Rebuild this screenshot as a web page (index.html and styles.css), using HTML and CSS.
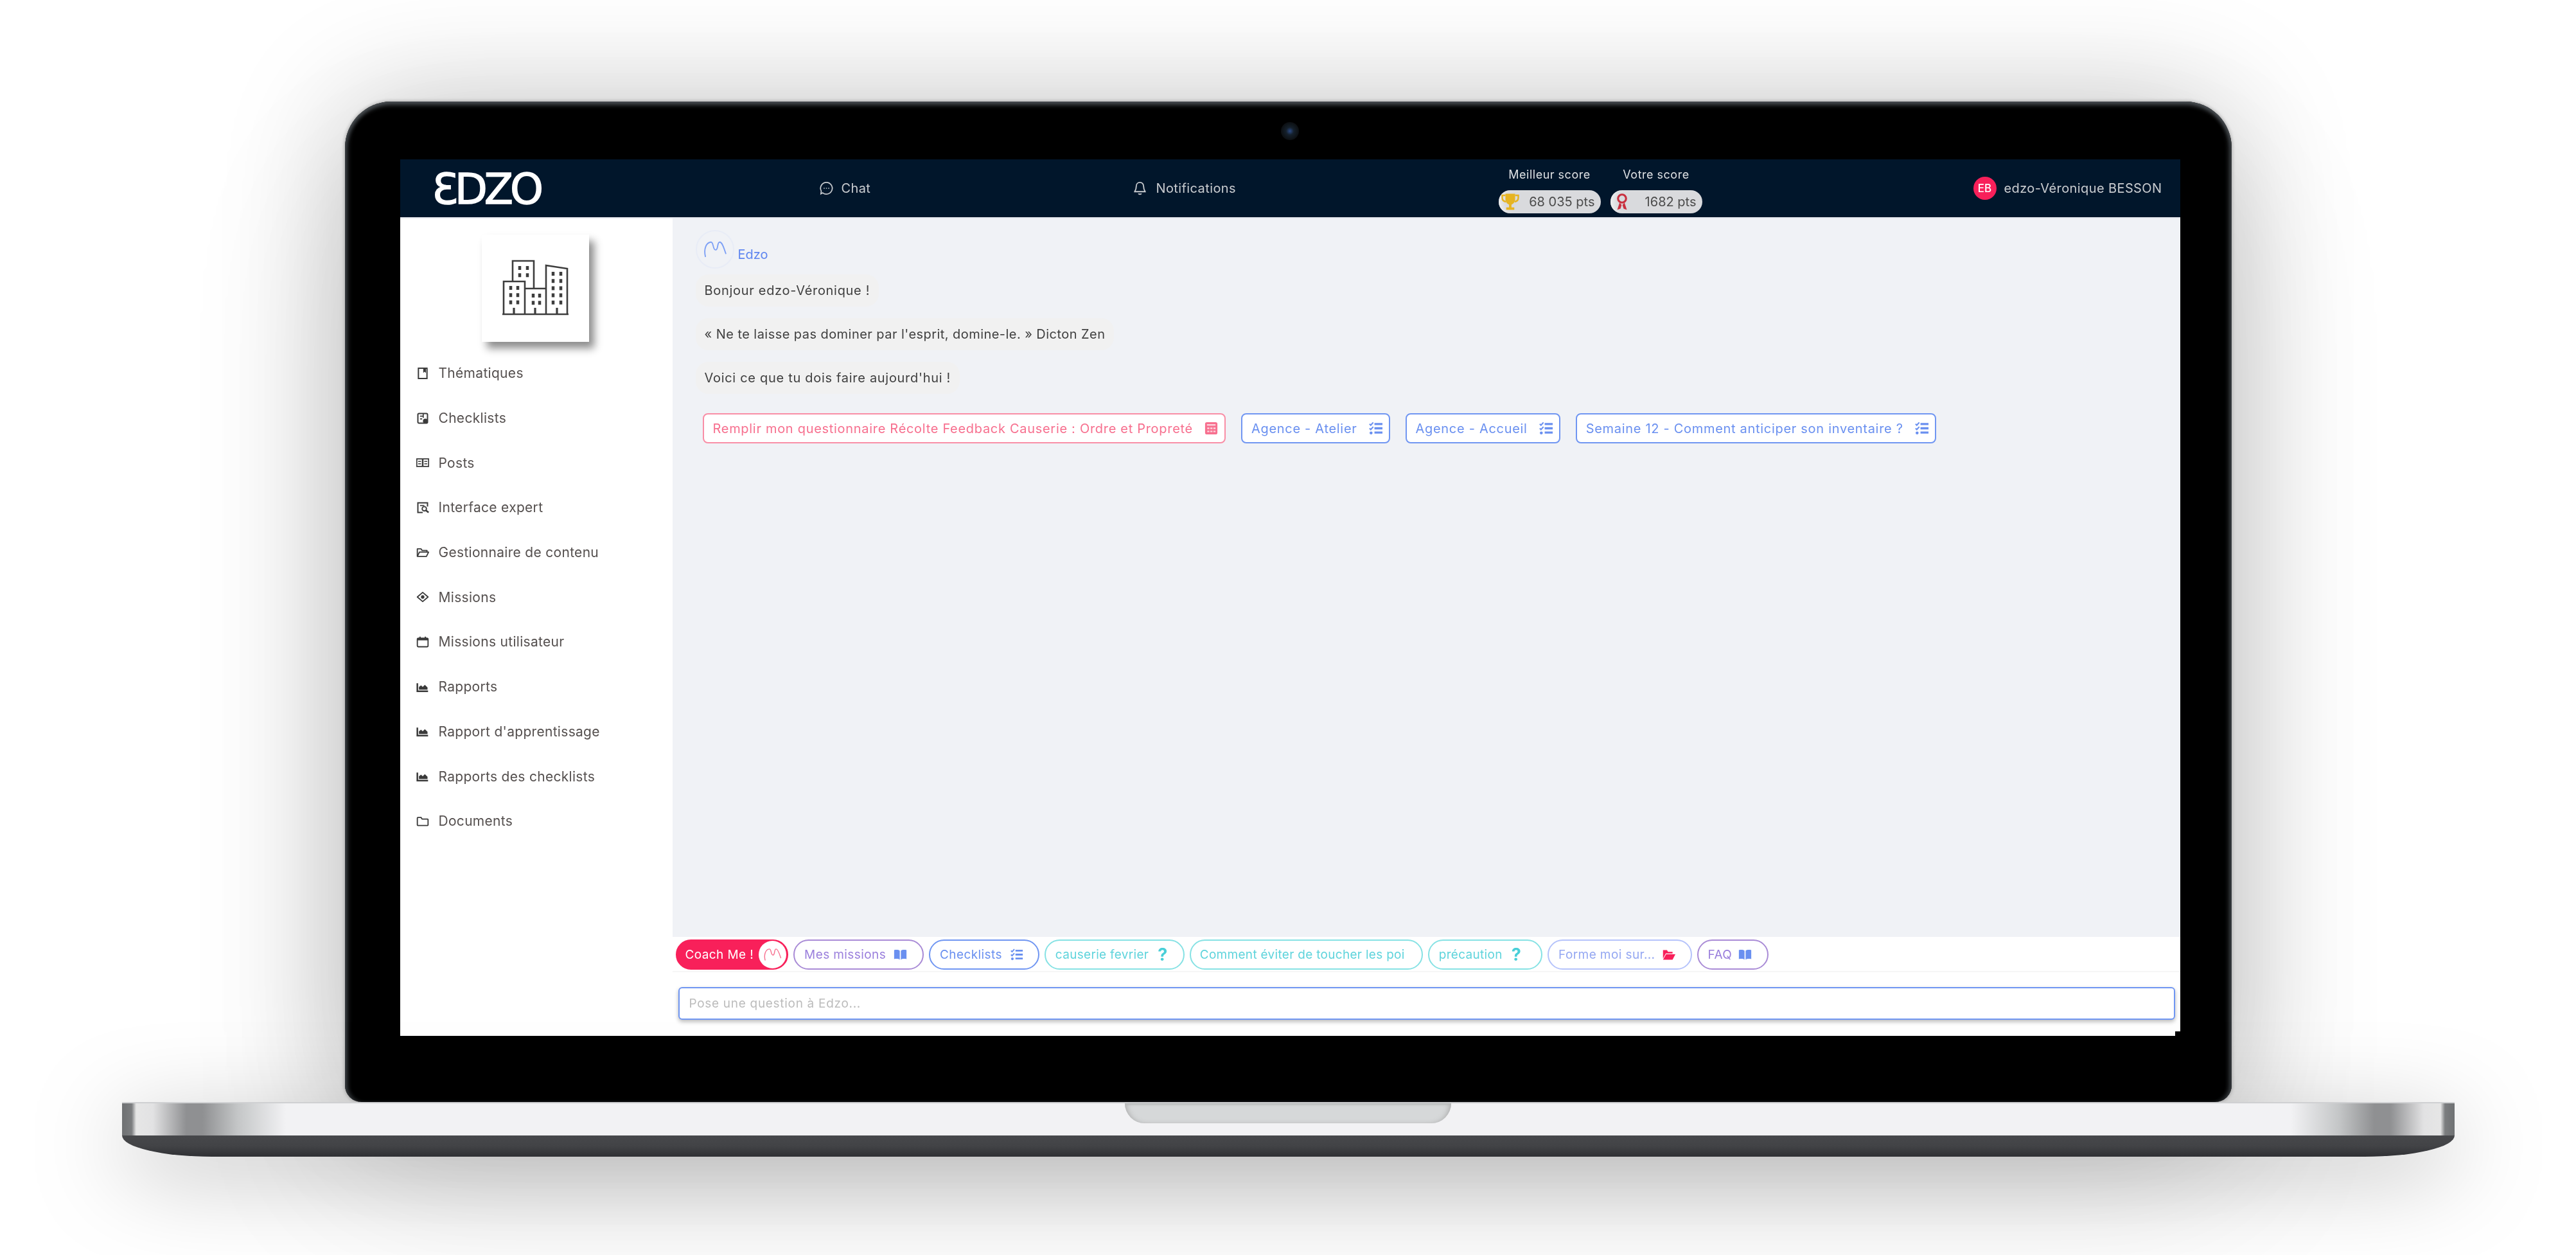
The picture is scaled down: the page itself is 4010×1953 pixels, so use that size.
FILE: index.html
```html
<!DOCTYPE html>
<html lang="fr">
  <head>
    <meta charset="UTF-8">
    <meta name="viewport" content="width=device-width, initial-scale=1.0">
    <title>Edzo</title>
    <link rel="stylesheet" href="styles.css">
  </head>
  <body>
    <svg class="sprite" xmlns="http://www.w3.org/2000/svg">
      <symbol id="i-book" viewBox="0 0 24 24"><path d="M4 2.500h16v19H4z" fill="none" stroke="currentColor" stroke-width="2.400"/><path d="M13 3h5v8l-2.500-2-2.500 2z" fill="currentColor"/></symbol>
      <symbol id="i-check" viewBox="0 0 24 24"><rect x="3" y="3" width="18" height="18" rx="2" fill="none" stroke="currentColor" stroke-width="2.400"/><path d="M7 8h7M7 13h4M13 3v8" stroke="currentColor" stroke-width="2" fill="none"/><circle cx="17" cy="17" r="4.500" fill="currentColor"/></symbol>
      <symbol id="i-posts" viewBox="0 0 24 24"><path d="M1 5h10.500v14H1zM12.500 5H23v14H12.500z" fill="none" stroke="currentColor" stroke-width="2"/><path d="M3.500 9.500h5.500M15 9.500h5.500M3.500 14h5.500M15 14h5.500" stroke="currentColor" stroke-width="1.800"/></symbol>
      <symbol id="i-expert" viewBox="0 0 24 24"><path d="M21 10V3H3v18h9" fill="none" stroke="currentColor" stroke-width="2.400"/><circle cx="15" cy="14" r="4" fill="none" stroke="currentColor" stroke-width="2.200"/><path d="M18 17l5 4" stroke="currentColor" stroke-width="3"/><path d="M7 8h8" stroke="currentColor" stroke-width="2"/></symbol>
      <symbol id="i-folder-open" viewBox="0 0 24 24"><path d="M2 19V5h7l2 3h9v3" fill="none" stroke="currentColor" stroke-width="2.200" stroke-linejoin="round"/><path d="M2 19l4-8h17l-4 8z" fill="none" stroke="currentColor" stroke-width="2.200" stroke-linejoin="round"/></symbol>
      <symbol id="i-mission" viewBox="0 0 24 24"><path d="M12 3.500L22 12l-10 8.500L2 12z" fill="none" stroke="currentColor" stroke-width="2.200" stroke-linejoin="round"/><circle cx="12" cy="12" r="3.200" fill="currentColor"/></symbol>
      <symbol id="i-cal" viewBox="0 0 24 24"><rect x="2" y="5" width="20" height="16" rx="2" fill="none" stroke="currentColor" stroke-width="2.200"/><path d="M2 7h20" stroke="currentColor" stroke-width="4"/><path d="M7 2v4M17 2v4" stroke="currentColor" stroke-width="2.400"/></symbol>
      <symbol id="i-area" viewBox="0 0 24 24"><path d="M2 5v15h20" fill="none" stroke="currentColor" stroke-width="3"/><path d="M5 17v-5l4-3 3 3 4-4 5 5v4z" fill="currentColor"/></symbol>
      <symbol id="i-folder" viewBox="0 0 24 24"><path d="M2 6a1 1 0 0 1 1-1h6l2 3h10a1 1 0 0 1 1 1v10a1 1 0 0 1-1 1H3a1 1 0 0 1-1-1z" fill="none" stroke="currentColor" stroke-width="2.200"/></symbol>
      <symbol id="i-tasks" viewBox="0 0 24 24"><path d="M10 5h13M10 12h13M10 19h13" stroke="currentColor" stroke-width="3.400"/><path d="M2 5l2 2 4-4.500" fill="none" stroke="currentColor" stroke-width="2.200"/><path d="M2 12l2 2 4-4.500" fill="none" stroke="currentColor" stroke-width="2.200"/><circle cx="4.500" cy="19.500" r="2.400" fill="currentColor"/></symbol>
      <symbol id="i-open-book" viewBox="0 0 24 24"><path d="M1 4c4-1 8-.500 10 1v16c-2-1.500-6-2-10-1zM23 4c-4-1-8-.500-10 1v16c2-1.500 6-2 10-1z" fill="currentColor"/></symbol>
      <symbol id="i-folder-solid" viewBox="0 0 24 24"><path d="M2 4h7l2 3h8v3H7l-5 9z" fill="currentColor"/><path d="M7.500 11.500H24L19 21H2z" fill="currentColor"/></symbol>
      <symbol id="i-calc" viewBox="0 0 24 24"><rect x="2" y="2" width="20" height="20" rx="3" fill="currentColor"/><path d="M5 6.500h14" stroke="#fff" stroke-width="2.500" opacity=".7"/><path d="M5.500 12h3.500M10.500 12h3.500M15.500 12h3.500M5.500 17h3.500M10.500 17h3.500M15.500 17h3.500" stroke="#fff" stroke-width="2.400" opacity=".7"/></symbol>
      <symbol id="i-chat" viewBox="0 0 24 24"><path d="M12 2.500a9.500 9.500 0 1 1-6 16.900L3 21l.6-4.500A9.500 9.500 0 0 1 12 2.500z" fill="none" stroke="currentColor" stroke-width="1.800"/><path d="M7.500 12h1.600M11.200 12h1.600M14.900 12h1.600" stroke="currentColor" stroke-width="1.800"/></symbol>
      <symbol id="i-bell" viewBox="0 0 24 24"><path d="M12 2.500c-3.500 0-6 2.500-6 6.500 0 5-2 7-2.500 8.500h17c-.5-1.500-2.500-3.500-2.500-8.500 0-4-2.500-6.500-6-6.500z" fill="none" stroke="currentColor" stroke-width="1.900"/><path d="M9.500 20.500c1 1.500 4 1.500 5 0" fill="none" stroke="currentColor" stroke-width="1.900"/></symbol>
      <symbol id="i-trophy" viewBox="0 0 24 24"><path d="M6 2h12v7c0 4-3 6-4.500 6.500V19H17v3H7v-3h3.500v-3.500C9 15 6 13 6 9z" fill="#e6b422"/><path d="M6 4H2v3c0 3 2 4.500 4.500 5M18 4h4v3c0 3-2 4.500-4.500 5" fill="none" stroke="#e6b422" stroke-width="2"/></symbol>
      <symbol id="i-medal" viewBox="0 0 24 24"><circle cx="12" cy="8" r="5" fill="none" stroke="#c9303f" stroke-width="2.500"/><path d="M9 13l-3 9 4-1.500L11.500 16M15 13l3 9-4-1.500L12.500 16" fill="#c9303f"/></symbol>
      <symbol id="i-scribble" viewBox="0 0 60 60"><path d="M14 42C11 30 15 19 23 18c5-1 3 13 8 13 5 0 2-13 7-13 4 0 7 10 10 19" fill="none" stroke="currentColor" stroke-width="2" stroke-linecap="round"/></symbol>
      <symbol id="i-city" viewBox="0 0 103 87">
        <path d="M16 34V2h33v43M2 85V34h33v51M35 85V45h33v40M68 85V9l33 5v71M0 85h103" fill="none" stroke="currentColor" stroke-width="2.600"/>
        <path d="M27 10v18M39 10v18M13 41v32M24 41v32M48 53v21M58 53v21M79 19v55M91 19v55" fill="none" stroke="currentColor" stroke-width="4.500" stroke-dasharray="6 5.200"/>
        <path d="M18 75v10M51 75v10M85 75v10" stroke="currentColor" stroke-width="3.200"/>
      </symbol>
    </svg>

    <div class="stage">
      <div class="lid">
        <div class="camera"></div>
        <div class="screen">
          <header class="topbar">
            <div class="logo">ƐDZO</div>
            <div class="topnav"><svg class="ico-nav"><use href="#i-chat"/></svg>Chat</div>
            <div class="topnav topnav-bell"><svg class="ico-nav"><use href="#i-bell"/></svg>Notifications</div>
            <div class="scores">
              <div class="score">
                <span class="score-title">Meilleur score</span>
                <span class="pill pill-best"><svg class="ico-pill"><use href="#i-trophy"/></svg>68 035 pts</span>
              </div>
              <div class="score">
                <span class="score-title">Votre score</span>
                <span class="pill pill-mine"><svg class="ico-pill"><use href="#i-medal"/></svg>1682 pts</span>
              </div>
            </div>
            <div class="user"><span class="avatar-user">EB</span>edzo-Véronique BESSON</div>
          </header>

          <div class="body">
            <aside class="sidebar">
              <div class="company"><svg class="ico-city"><use href="#i-city"/></svg></div>
              <ul class="menu">
                <li><svg><use href="#i-book"/></svg>Thématiques</li>
                <li><svg><use href="#i-check"/></svg>Checklists</li>
                <li><svg><use href="#i-posts"/></svg>Posts</li>
                <li><svg><use href="#i-expert"/></svg>Interface expert</li>
                <li><svg><use href="#i-folder-open"/></svg>Gestionnaire de contenu</li>
                <li><svg><use href="#i-mission"/></svg>Missions</li>
                <li><svg><use href="#i-cal"/></svg>Missions utilisateur</li>
                <li><svg><use href="#i-area"/></svg>Rapports</li>
                <li><svg><use href="#i-area"/></svg>Rapport d'apprentissage</li>
                <li><svg><use href="#i-area"/></svg>Rapports des checklists</li>
                <li><svg><use href="#i-folder"/></svg>Documents</li>
              </ul>
            </aside>

            <main class="main">
              <section class="chat">
                <div class="bot">
                  <span class="bot-avatar"><svg><use href="#i-scribble"/></svg></span>
                  <span class="bot-name">Edzo</span>
                </div>
                <p class="bubble">Bonjour edzo-Véronique !</p>
                <p class="bubble bubble-quote">« Ne te laisse pas dominer par l'esprit, domine-le. » Dicton Zen</p>
                <p class="bubble">Voici ce que tu dois faire aujourd'hui !</p>
                <div class="actions">
                  <a class="action action-red">Remplir mon questionnaire Récolte Feedback Causerie : Ordre et Propreté<svg><use href="#i-calc"/></svg></a>
                  <a class="action">Agence - Atelier<svg><use href="#i-tasks"/></svg></a>
                  <a class="action">Agence - Accueil<svg><use href="#i-tasks"/></svg></a>
                  <a class="action">Semaine 12 - Comment anticiper son inventaire ?<svg><use href="#i-tasks"/></svg></a>
                </div>
              </section>

              <div class="chips">
                <a class="chip chip-coach">Coach Me !<span class="coach-face"><svg><use href="#i-scribble"/></svg></span></a>
                <a class="chip chip-purple">Mes missions<svg><use href="#i-open-book"/></svg></a>
                <a class="chip chip-blue">Checklists<svg><use href="#i-tasks"/></svg></a>
                <a class="chip chip-cyan">causerie fevrier<b class="qmark">?</b></a>
                <a class="chip chip-cyan chip-long">Comment éviter de toucher les poi</a>
                <a class="chip chip-cyan chip-short">précaution<b class="qmark">?</b></a>
                <a class="chip chip-peri">Forme moi sur...<svg class="ico-red"><use href="#i-folder-solid"/></svg></a>
                <a class="chip chip-purple chip-faq">FAQ<svg class="ico-blue"><use href="#i-open-book"/></svg></a>
              </div>

              <div class="ask">
                <input class="ask-input" type="text" placeholder="Pose une question à Edzo...">
              </div>
            </main>
          </div>
        </div>
      </div>

      <div class="base">
        <div class="base-top"><div class="notch"></div></div>
        <div class="base-bottom"></div>
      </div>
    </div>
  </body>
</html>
```

FILE: styles.css
```css
* {
  box-sizing: border-box;
  margin: 0;
  padding: 0;
}
:root {
  --blue: #7096f2;
  --red: #f8205a;
  --ink: #4a4a4a;
}
html, body {
  width: 4010px;
  height: 1953px;
  overflow: hidden;
  background: #fff;
  font-family: "Inter", "Liberation Sans", sans-serif;
}
.sprite {
  display: none;
}

/* laptop */
.stage {
  height: 100%;
  padding-top: 158px;
  display: flex;
  flex-direction: column;
  align-items: center;
}
.lid {
  width: 2937px;
  height: 1557px;
  padding: 0 80px 103px 86px;
  display: flex;
  flex-direction: column;
  background: #000;
  border-radius: 72px 72px 26px 26px;
  box-shadow: inset 0 7px 7px -2px #4b5054, inset 7px 0 7px -3px #3c4145, inset -7px 0 7px -3px #3c4145, 0 0 4px 2px #bdbdbd, 0 0 190px rgba(0, 0, 0, .22), 0 120px 260px rgba(0, 0, 0, .12);
}
.camera {
  width: 28px;
  height: 28px;
  margin: 32px auto 30px;
  border-radius: 50%;
  background: radial-gradient(circle, #2b4a86 0, #15202b 30%, #0c0f12 70%, #000 100%);
}
.base {
  width: 3631px;
  filter: drop-shadow(0 30px 70px rgba(0, 0, 0, .25));
}
.base-top {
  height: 52px;
  display: flex;
  justify-content: center;
  border-top: 2px solid #cfd0d2;
  background: linear-gradient(90deg, #6f7173 0, #7b7d7f 15px, #e6e6e6 22px, #e2e2e3 48px, #8f9092 100px, #8f9092 125px, #c4c6c7 180px, #f2f2f4 255px, #f2f2f4 calc(100% - 255px), #c4c6c7 calc(100% - 180px), #8f9092 calc(100% - 125px), #8f9092 calc(100% - 100px), #e2e2e3 calc(100% - 48px), #e6e6e6 calc(100% - 22px), #7b7d7f calc(100% - 15px), #6f7173 100%);
}
.notch {
  width: 508px;
  height: 31px;
  border-radius: 0 0 34px 34px;
  background: #d6d8d9;
  box-shadow: inset 0 3px 3px -1px #b9bbbc, inset 6px 0 8px -4px #aaa, inset -6px 0 8px -4px #aaa;
}
.base-bottom {
  height: 33px;
  border-radius: 0 0 140px 140px / 0 0 33px 33px;
  background: linear-gradient(#47484b, #424346 50%, #2f3034);
}

/* app */
.screen {
  flex: 1;
  position: relative;
  display: flex;
  flex-direction: column;
  background: #fff;
  overflow: hidden;
  filter: blur(.6px);
}
.screen::after {
  content: "";
  position: absolute;
  right: 0;
  bottom: 0;
  width: 8px;
  height: 7px;
  background: #000;
}
.topbar {
  height: 90px;
  flex: none;
  display: grid;
  grid-template-columns: 652px 488px 570px 739px 1fr;
  align-items: center;
  background: #01162b;
  color: #c9ccd0;
  font-size: 20px;
  letter-spacing: .4px;
}
.logo {
  padding: 4px 0 0 50px;
  font-family: "DejaVu Sans", sans-serif;
  font-weight: 400;
  font-size: 66px;
  line-height: 1;
  letter-spacing: -5px;
  color: #fff;
  -webkit-text-stroke: 1.5px #fff;
}
.topnav {
  display: flex;
  align-items: center;
  gap: 12px;
}
.topnav-bell {
  gap: 14px;
}
.ico-nav {
  width: 23px;
  height: 24px;
}
.scores {
  display: flex;
  gap: 15px;
  padding-top: 8px;
}
.score {
  display: flex;
  flex-direction: column;
  align-items: center;
  gap: 14px;
}
.score-title {
  font-size: 18px;
  line-height: 20px;
  letter-spacing: .5px;
  color: #dfe1e4;
}
.pill {
  height: 36px;
  display: flex;
  align-items: center;
  justify-content: flex-end;
  padding-right: 9px;
  border-radius: 18px;
  background: #d9dadd;
  color: #4c4c4c;
  font-size: 20px;
  letter-spacing: 0;
  box-shadow: inset 12px 0 8px -8px #f2f2f2;
}
.pill-best {
  width: 159px;
}
.pill-mine {
  width: 143px;
}
.ico-pill {
  width: 30px;
  height: 30px;
  margin-right: auto;
  margin-left: 3px;
}
.user {
  display: flex;
  align-items: center;
  gap: 12px;
}
.avatar-user {
  width: 36px;
  height: 36px;
  display: flex;
  align-items: center;
  justify-content: center;
  border-radius: 50%;
  background: var(--red);
  color: #fff;
  font-size: 17px;
  font-weight: 500;
  letter-spacing: 0;
}

.body {
  flex: 1;
  display: flex;
  min-height: 0;
  border-top: 2px solid #e6e8ee;
}
.sidebar {
  width: 424px;
  flex: none;
  background: #fff;
}
.company {
  width: 167px;
  height: 167px;
  margin: 25px 0 14px 127px;
  display: flex;
  justify-content: center;
  padding-top: 39px;
  background: #fff;
  box-shadow: 8px 10px 12px rgba(0, 0, 0, .45);
}
.ico-city {
  width: 103px;
  height: 87px;
  color: #3d3d3d;
}
.menu {
  list-style: none;
}
.menu li {
  height: 69.7px;
  padding-left: 25px;
  display: flex;
  align-items: center;
  gap: 15px;
  color: #55504f;
  font-size: 21px;
  letter-spacing: .3px;
}
.menu svg {
  width: 20px;
  height: 20px;
  color: #3a3a3a;
}

.main {
  flex: 1;
  min-width: 0;
  display: flex;
  flex-direction: column;
}
.chat {
  height: 1118px;
  flex: none;
  padding: 18px 0 0 36px;
  display: flex;
  flex-direction: column;
  align-items: flex-start;
  background: #f0f2f6;
}
.bot {
  height: 60px;
  display: flex;
  margin-bottom: 9px;
}
.bot-avatar {
  width: 60px;
  height: 60px;
  border: 2px solid #e8ecf6;
  border-radius: 50%;
  color: #7da0f5;
}
.bot-avatar svg {
  width: 100%;
  height: 100%;
}
.bot-name {
  margin: 26px 0 0 6px;
  color: #5f86f0;
  font-size: 20px;
  line-height: 24px;
}
.bubble {
  height: 50px;
  margin-bottom: 18px;
  padding: 0 14px;
  display: flex;
  align-items: center;
  border-radius: 20px;
  background: #f1f1f1;
  color: #3f3f3f;
  font-size: 20px;
  letter-spacing: .7px;
}
.bubble-quote {
  letter-spacing: .45px;
}
.actions {
  display: flex;
  gap: 24px;
  margin: 12px 0 0 11px;
}
.action {
  height: 47px;
  padding: 0 9px 0 14px;
  display: flex;
  align-items: center;
  gap: 17px;
  border: 2px solid var(--blue);
  border-radius: 8px;
  background: #fff;
  color: #6a90f0;
  font-size: 20px;
  letter-spacing: .7px;
}
.action svg {
  width: 23px;
  height: 23px;
}
.action-red {
  border-color: #f98ea6;
  color: #f7708f;
}

.chips {
  height: 55px;
  flex: none;
  padding: 4px 0 0 5px;
  display: flex;
  gap: 8px;
  border-bottom: 2px solid #f6f6f6;
  background: #fff;
}
.chip {
  height: 47px;
  padding: 0 24px 0 15px;
  display: flex;
  align-items: center;
  gap: 12px;
  border: 2px solid var(--blue);
  border-radius: 24px;
  background: #fff;
  color: #6a90f0;
  font-size: 19px;
  letter-spacing: .4px;
  white-space: nowrap;
}
.chip svg {
  width: 21px;
  height: 21px;
}
.chip-coach {
  padding: 0 1px 0 13px;
  border-color: var(--red);
  background: var(--red);
  color: #fff;
  gap: 8px;
}
.coach-face {
  width: 43px;
  height: 43px;
  border-radius: 50%;
  background: #fff;
  color: #f7708f;
}
.coach-face svg {
  width: 100%;
  height: 100%;
}
.chip-purple {
  border-color: #a98bd6;
  color: #9a7fdc;
}
.chip-purple svg {
  color: #6a90f0;
}
.chip-blue {
  border-color: var(--blue);
  padding-right: 23px;
}
.chip-cyan {
  border-color: #86e2e4;
  color: #5fd4dc;
  letter-spacing: .3px;
  gap: 14px;
}
.chip-peri {
  border-color: #b5c3fb;
  color: #95a8f2;
  gap: 10px;
}
.chip-long {
  width: 363px;
  padding: 0 14px;
}
.chip-short {
  padding-right: 31px;
}
.chip-faq {
  gap: 10px;
}
.qmark {
  font-size: 27px;
  line-height: 1;
  color: #49cfd8;
}
.ico-red {
  color: var(--red);
}
.ask {
  padding: 23px 8px 0 9px;
}
.ask-input {
  width: 100%;
  height: 51px;
  padding: 0 15px;
  border: 2px solid var(--blue);
  border-radius: 6px;
  background: #fff;
  font-family: inherit;
  font-size: 19px;
  letter-spacing: .7px;
  box-shadow: 0 3px 6px rgba(0, 0, 0, .28);
}
.ask-input::placeholder {
  color: #bcbcbc;
}
```
